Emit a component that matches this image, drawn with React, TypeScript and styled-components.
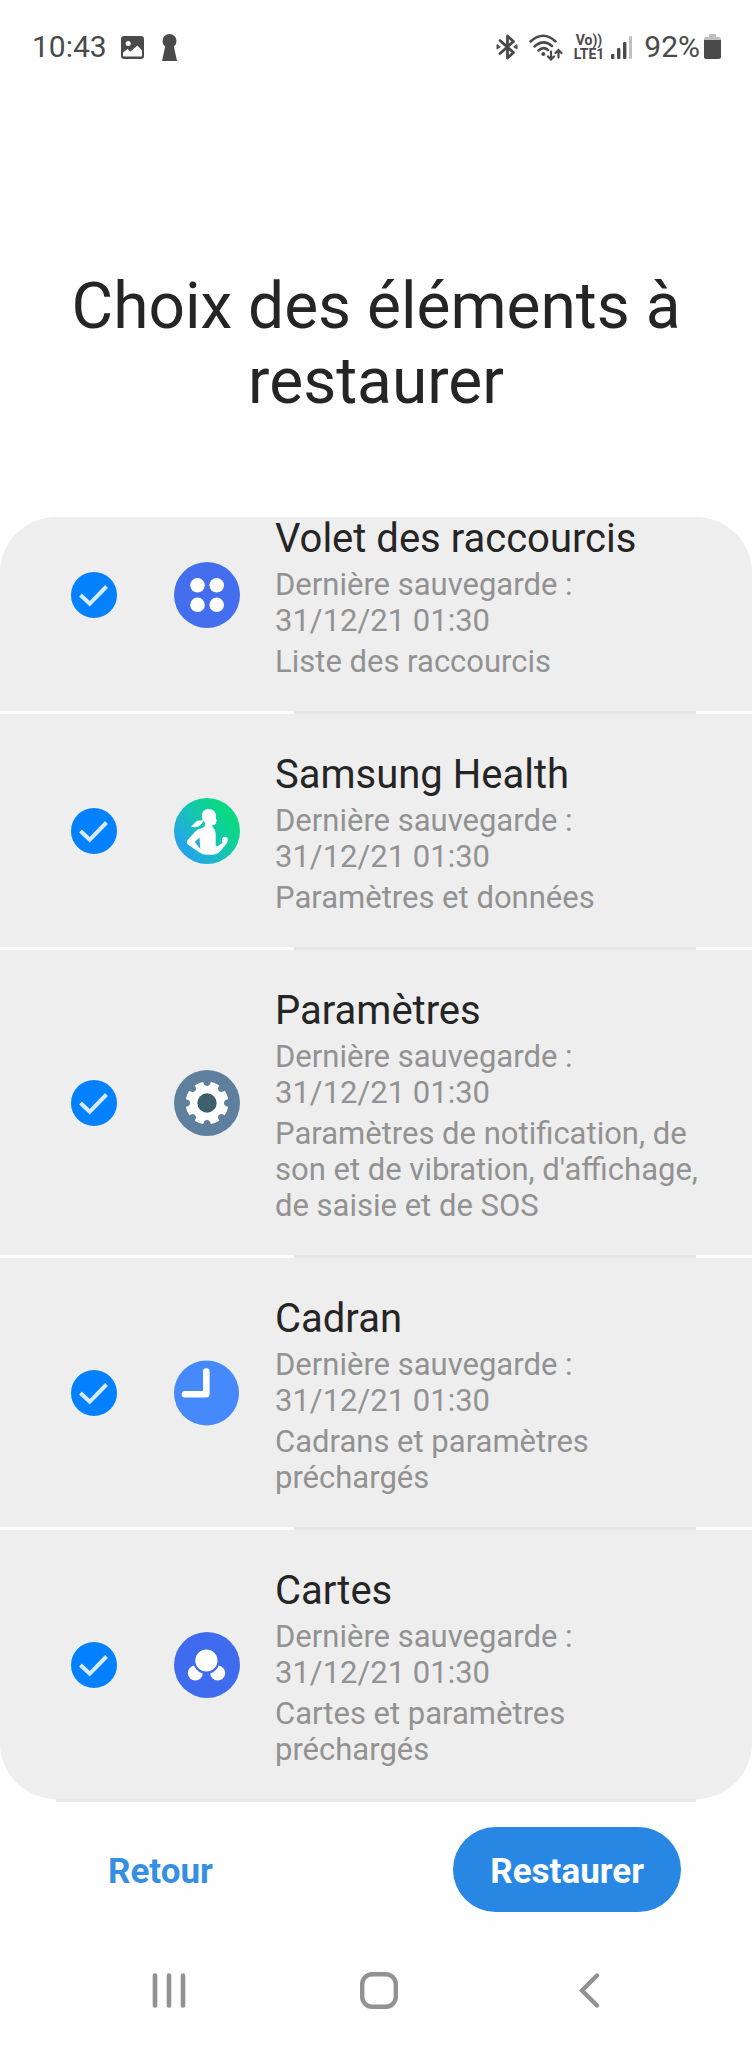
import React, { useState } from 'react';
import styled, { createGlobalStyle } from 'styled-components';

const GlobalStyle = createGlobalStyle`
  * { box-sizing: border-box; }
  body {
    margin: 0;
    background: #fefefe;
    color: #252525;
    font-family: Roboto, "Liberation Sans", sans-serif;
  }
`;

const Screen = styled.div`
  display: flex;
  flex-direction: column;
  min-height: 100vh;
`;

const StatusBar = styled.header`
  display: flex;
  justify-content: space-between;
  align-items: center;
  height: 94px;
  padding: 0 31px 0 32px;
  color: #4a4a4a;
  font-size: 30px;
  line-height: 36px;
`;

const StatusGroup = styled.div<{ $gap: number }>`
  display: flex;
  align-items: center;
  gap: ${(p) => p.$gap}px;
`;

const Network = styled.span`
  display: flex;
  flex-direction: column;
  align-items: center;
  font-size: 14px;
  font-weight: 700;
  line-height: 14px;
`;

const Title = styled.h1`
  margin: 0;
  padding: 175px 56px 98px;
  font-size: 64px;
  font-weight: 400;
  line-height: 75px;
  text-align: center;
`;

const Panel = styled.main`
  display: flow-root;
  border-radius: 56px;
  background: #eeeeee;
`;

/* The list is scrolled a little way under the panel's top edge. */
const List = styled.ul`
  margin: -39px 0 0;
  padding: 0;
  list-style: none;
`;

const Item = styled.li`
  & + &::before {
    content: "";
    display: block;
    height: 3px;
    padding: 0 56px 0 294px;
    background:
      linear-gradient(#e6e6e6, #e6e6e6) content-box no-repeat,
      #fdfdfd;
  }
`;

const Row = styled.label`
  display: flex;
  align-items: center;
  padding: 0 52px 0 71px;
  cursor: pointer;
`;

const Tick = styled.span`
  display: grid;
  flex: none;
  width: 46px;
  height: 46px;
  margin-right: 57px;

  & > * {
    grid-area: 1 / 1;
  }
`;

const TickInput = styled.input`
  appearance: none;
  width: 46px;
  height: 46px;
  margin: 0;
  border: 3px solid #9a9a9a;
  border-radius: 50%;

  &:checked {
    border-color: #0381fe;
    background: #0381fe;
  }

  & + svg {
    visibility: hidden;
    pointer-events: none;
  }

  &:checked + svg {
    visibility: visible;
  }
`;

const AppIcon = styled.svg`
  flex: none;
  width: 66px;
  height: 66px;
  margin-right: 35px;
`;

const ItemText = styled.span`
  flex: 1;
  min-width: 0;
  padding: 41px 0 31px;
`;

const ItemName = styled.span`
  display: block;
  margin-bottom: 8px;
  font-size: 40px;
  line-height: 40px;
`;

const ItemDetail = styled.span`
  display: block;
  color: #929292;
  font-size: 31px;
  line-height: 36px;

  & + & {
    margin-top: 5px;
  }
`;

const FooterRule = styled.div`
  height: 3px;
  margin: 0 56px;
  background: #e9e9e9;
`;

const Actions = styled.footer`
  display: flex;
  justify-content: space-between;
  padding: 25px 71px 60px;
`;

const ActionButton = styled.button<{ $primary?: boolean }>`
  height: 85px;
  padding: 4px 37px 0;
  border: 0;
  border-radius: 43px;
  background: ${(p) => (p.$primary ? '#2987e4' : 'transparent')};
  color: ${(p) => (p.$primary ? '#fbfdff' : '#378fe3')};
  font: 700 35px/40px Roboto, "Liberation Sans", sans-serif;
  cursor: pointer;
`;

const NavBar = styled.nav`
  display: flex;
  padding: 0 58px 39px 64px;
`;

const NavButton = styled.button`
  display: flex;
  flex: 1;
  justify-content: center;
  padding: 0;
  border: 0;
  background: none;
  color: #929292;
  cursor: pointer;
`;

const QuickPanelIcon = () => (
  <AppIcon viewBox="0 0 66 66" aria-hidden="true">
    <circle cx="33" cy="33" r="33" fill="#436eee" />
    <g fill="#fff">
      <circle cx="23.5" cy="23.3" r="7.3" />
      <circle cx="42.7" cy="23.3" r="7.3" />
      <circle cx="23.5" cy="42.8" r="7.3" />
      <circle cx="42.7" cy="42.8" r="7.3" />
    </g>
  </AppIcon>
);

const HealthIcon = () => (
  <AppIcon viewBox="0 0 66 66" aria-hidden="true">
    <defs>
      <linearGradient id="health" x1="0.1" y1="0.85" x2="0.8" y2="0.3">
        <stop offset="0" stopColor="#279df5" />
        <stop offset="0.5" stopColor="#17c0bd" />
        <stop offset="1" stopColor="#0ad885" />
      </linearGradient>
    </defs>
    <circle cx="33" cy="33" r="33" fill="url(#health)" />
    <g fill="#fff">
      <path d="M34.500 11C39 11 42 14.200 42 18V20.500L43 23 42 23.700 41.800 25.500Q41.300 27.300 38.500 27V29Q41.500 31.500 41.700 36V47.500L43 48.500 48.500 45Q47 41.500 49 39.500 51 38 53 39.500 54.500 41.500 53 45L46.500 53Q43 56.800 38 56.800H32.500Q28.500 56.800 25 54.300L14.300 46.800Q11.800 44.500 13.500 42.200L21 33.700Q23.500 31 27.500 30.200 31 29.300 31 26V24.500Q27.800 22 27.800 18C27.800 14 30.500 11 34.500 11z" />
      <path d="M29.500 22.500Q23.500 21.700 21 24.500 19.500 27 16.800 28.200 22.500 30.500 26 27.500 28.300 25.500 29.500 22.500z" />
    </g>
    <path d="M20.800 44l4.700-4.500.8 11.500z" fill="#28a5e8" />
  </AppIcon>
);

const SettingsIcon = () => (
  <AppIcon viewBox="0 0 66 66" aria-hidden="true">
    <circle cx="33" cy="33" r="33" fill="#5e7f9d" />
    <circle cx="33" cy="33" r="21.500" fill="#fff" />
    <g fill="#5e7f9d">
      {[0, 45, 90, 135, 180, 225, 270, 315].map((angle) => (
        <path
          key={angle}
          d="M28.500 10L29.500 13Q30.300 16 33 16T36.500 13L37.500 10z"
          transform={`rotate(${angle} 33 33)`}
        />
      ))}
    </g>
    <circle cx="33" cy="33" r="9.700" fill="#3e5f6c" />
  </AppIcon>
);

const WatchFaceIcon = () => (
  <AppIcon viewBox="0 0 66 66" aria-hidden="true">
    <circle cx="32.500" cy="33" r="32.500" fill="#4589fb" />
    <path d="M32.300 11.500V34.300H11" fill="none" stroke="#fff" strokeWidth="6.600" strokeLinecap="round" strokeLinejoin="round" />
  </AppIcon>
);

const TilesIcon = () => (
  <AppIcon viewBox="0 0 66 66" aria-hidden="true">
    <circle cx="33" cy="33" r="33" fill="#3f6bee" />
    <circle cx="21.300" cy="41" r="7.500" fill="#fff" />
    <circle cx="43.700" cy="41" r="7.500" fill="#fff" />
    <circle cx="32.400" cy="28.500" r="12.200" fill="#fff" stroke="#3f6bee" strokeWidth="2.200" />
  </AppIcon>
);

const ImageGlyph = () => (
  <svg width="23" height="23" viewBox="0 0 23 23" aria-hidden="true">
    <rect width="23" height="23" rx="3" fill="currentColor" />
    <circle cx="7.200" cy="7.500" r="2.500" fill="#fefefe" />
    <path d="M2 16.500L6.500 13 9.500 15.500 16.500 9.500 21 14.500V19.500Q21 20.500 20 20.500H3Q2 20.500 2 19.500z" fill="#fefefe" />
  </svg>
);

const KeyholeGlyph = () => (
  <svg width="15" height="27" viewBox="0 0 15 27" aria-hidden="true">
    <circle cx="7.500" cy="7" r="7" fill="currentColor" />
    <path d="M3.500 11h8L15 27H0z" fill="currentColor" />
  </svg>
);

const BluetoothGlyph = () => (
  <svg width="22" height="26" viewBox="0 0 22 26" fill="none" stroke="currentColor" strokeWidth="2.800" strokeLinejoin="round" strokeLinecap="round" aria-hidden="true">
    <path d="M4 6.500L17.500 18.500 11.500 24V2L17.500 7.500 4 19.500" />
    <path d="M1 11v4l3-2zM21 11v4l-3-2z" strokeWidth="1" fill="currentColor" />
  </svg>
);

const WifiGlyph = () => (
  <svg width="34" height="27" viewBox="0 0 34 27" fill="none" stroke="currentColor" strokeWidth="2.500" strokeLinecap="round" aria-hidden="true">
    <path d="M1.500 7.500Q14.500-4 26.500 7.500M5.500 12.500Q14.500 4.500 23 12M9.500 16.500Q14.500 12 19 16" />
    <circle cx="14.300" cy="20" r="2" fill="currentColor" stroke="none" />
    <path d="M22 17.500V25M19 22.500L22 25.500 25 22.500M29.500 23.500V16.500M26.500 19L29.500 16 32.500 19" strokeWidth="2.200" />
  </svg>
);

const SignalGlyph = () => (
  <svg width="22" height="25" viewBox="0 0 22 25" fill="currentColor" aria-hidden="true">
    <rect x="0" y="19" width="3.400" height="5" rx="1" />
    <rect x="6" y="13" width="3.400" height="11" rx="1" />
    <rect x="12" y="7" width="3.400" height="17" rx="1" />
    <rect x="18" y="1" width="3" height="23" rx="1" fill="#c0c0c0" />
  </svg>
);

const BatteryGlyph = () => (
  <svg width="17" height="26" viewBox="0 0 17 26" aria-hidden="true">
    <path d="M5 1q0-1 1-1h5q1 0 1 1v2h3q2 0 2 2v4H0V5q0-2 2-2h3z" fill="#c0c0c0" />
    <path d="M0 6h17v17q0 2-2 2H2q-2 0-2-2z" fill="currentColor" />
  </svg>
);

interface Backup {
  name: string;
  content: string;
  Icon: React.ComponentType;
}

const backups: Backup[] = [
  { name: 'Volet des raccourcis', content: 'Liste des raccourcis', Icon: QuickPanelIcon },
  { name: 'Samsung Health', content: 'Paramètres et données', Icon: HealthIcon },
  {
    name: 'Paramètres',
    content: "Paramètres de notification, de son et de vibration, d'affichage, de saisie et de SOS",
    Icon: SettingsIcon,
  },
  { name: 'Cadran', content: 'Cadrans et paramètres préchargés', Icon: WatchFaceIcon },
  { name: 'Cartes', content: 'Cartes et paramètres préchargés', Icon: TilesIcon },
];

function BackupRow({ name, content, Icon }: Backup) {
  const [checked, setChecked] = useState(true);
  return (
    <Item>
      <Row>
        <Tick>
          <TickInput type="checkbox" checked={checked} onChange={(e) => setChecked(e.target.checked)} />
          <svg width="46" height="46" viewBox="0 0 46 46" aria-hidden="true">
            <path d="M9.500 23L18.700 31.800 35.500 14.500" fill="none" stroke="#d6ebff" strokeWidth="4" />
          </svg>
        </Tick>
        <Icon />
        <ItemText>
          <ItemName>{name}</ItemName>
          <ItemDetail>Dernière sauvegarde : 31/12/21 01:30</ItemDetail>
          <ItemDetail>{content}</ItemDetail>
        </ItemText>
      </Row>
    </Item>
  );
}

export default function App() {
  return (
    <Screen>
      <GlobalStyle />
      <StatusBar>
        <StatusGroup $gap={14}>
          <span>10:43</span>
          <StatusGroup $gap={18}>
            <ImageGlyph />
            <KeyholeGlyph />
          </StatusGroup>
        </StatusGroup>
        <StatusGroup $gap={11}>
          <BluetoothGlyph />
          <WifiGlyph />
          <StatusGroup $gap={7}>
            <Network>
              <span>Vo))</span>
              <span>LTE1</span>
            </Network>
            <SignalGlyph />
          </StatusGroup>
          <StatusGroup $gap={4}>
            <span>92%</span>
            <BatteryGlyph />
          </StatusGroup>
        </StatusGroup>
      </StatusBar>
      <Title>Choix des éléments à restaurer</Title>
      <Panel>
        <List>
          {backups.map((backup) => (
            <BackupRow key={backup.name} {...backup} />
          ))}
        </List>
      </Panel>
      <FooterRule />
      <Actions>
        <ActionButton type="button">Retour</ActionButton>
        <ActionButton type="button" $primary>
          Restaurer
        </ActionButton>
      </Actions>
      <NavBar>
        <NavButton type="button" aria-label="Applications récentes">
          <svg width="34" height="37" viewBox="0 0 34 37" fill="none" stroke="currentColor" strokeWidth="4.600" strokeLinecap="round">
            <path d="M3 3.500v30M17 3.500v30M31 3.500v30" />
          </svg>
        </NavButton>
        <NavButton type="button" aria-label="Accueil">
          <svg width="38" height="37" viewBox="0 0 38 37" fill="none" stroke="currentColor" strokeWidth="4.400">
            <rect x="2.200" y="2.200" width="33.600" height="32.600" rx="10" />
          </svg>
        </NavButton>
        <NavButton type="button" aria-label="Précédent">
          <svg width="22" height="37" viewBox="0 0 22 37" fill="none" stroke="currentColor" strokeWidth="4.400" strokeLinecap="round">
            <path d="M19 3.500L4 18.500 19 33.500" />
          </svg>
        </NavButton>
      </NavBar>
    </Screen>
  );
}
